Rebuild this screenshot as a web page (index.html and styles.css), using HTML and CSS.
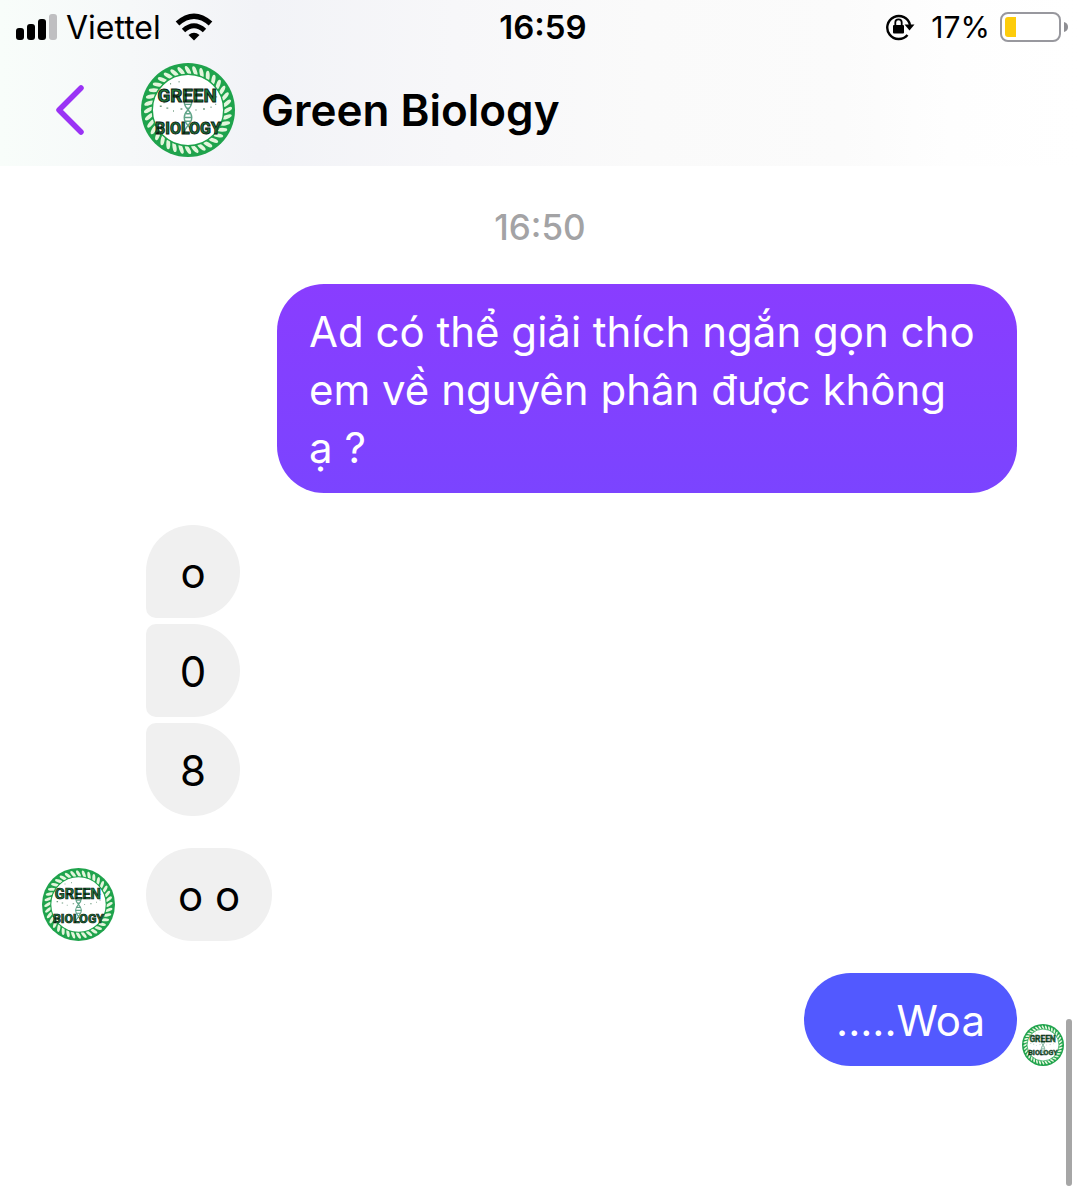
FILE: index.html
```html
<!DOCTYPE html>
<html lang="vi">
<head>
<meta charset="utf-8">
<meta name="viewport" content="width=device-width, initial-scale=1">
<title>Green Biology</title>
<link rel="stylesheet" href="styles.css">
</head>
<body>
<svg class="sprite" aria-hidden="true">
  <defs>
    <ellipse id="strand" cx="50" cy="8" rx="2.1" ry="5.4" transform="rotate(-30 50 8)"/>
    <g id="strands">
      <use href="#strand"/>
      <use href="#strand" transform="rotate(10 50 50)"/>
      <use href="#strand" transform="rotate(20 50 50)"/>
      <use href="#strand" transform="rotate(30 50 50)"/>
      <use href="#strand" transform="rotate(40 50 50)"/>
      <use href="#strand" transform="rotate(50 50 50)"/>
    </g>
    <symbol id="logo" viewBox="0 0 100 100">
      <circle cx="50" cy="50" r="50" fill="#1fa34c"/>
      <g fill="#e4f6dc">
        <use href="#strands"/>
        <use href="#strands" transform="rotate(60 50 50)"/>
        <use href="#strands" transform="rotate(120 50 50)"/>
        <use href="#strands" transform="rotate(180 50 50)"/>
        <use href="#strands" transform="rotate(240 50 50)"/>
        <use href="#strands" transform="rotate(300 50 50)"/>
      </g>
      <circle cx="50" cy="50" r="38" fill="#fff" stroke="#1fa34c" stroke-width="1.5"/>
      <path d="M20 46h2M24 42h1M27 48h2M34 51h1M42 49h2M58 50h1M66 49h2M74 47h1M79 44h1M80 36h1M31 22h1M40 20h1M26 29h1" stroke="#6f9c80" stroke-width="1.5"/>
      <path d="M46 41c0 9 8 9 8 17s-8 9-8 17M54 41c0 9-8 9-8 17s8 9 8 17M46 44h8M48 48h4M48 54h4M46 58h8M47 62h6" fill="none" stroke="#5fa387" stroke-width="1.5"/>
      <text class="logo-text logo-top" x="49" y="42">GREEN</text>
      <text class="logo-text" x="50" y="75">BIOLOGY</text>
    </symbol>
  </defs>
</svg>

<header class="top">
  <div class="status">
    <div class="status-left">
      <svg class="signal" viewBox="0 0 42 28" aria-hidden="true">
        <rect x="0" y="15" width="8" height="12" rx="3"/>
        <rect x="11" y="11" width="8" height="16" rx="3"/>
        <rect x="22" y="6" width="8" height="21" rx="3"/>
        <rect x="33" y="1" width="8" height="26" rx="3" fill="#bfbfc1"/>
      </svg>
      <span class="carrier">Viettel</span>
      <svg class="wifi" viewBox="0 0 38 28" aria-hidden="true">
        <path d="M2.500 10.500Q19-4 35.500 10.500" fill="none" stroke="#000" stroke-width="5.500"/>
        <path d="M8.500 17.500Q19 8 29.500 17.500" fill="none" stroke="#000" stroke-width="5"/>
        <path d="M19 27.500l-5.500-5.500q5.500-4.500 11 0z"/>
      </svg>
    </div>
    <time class="clock">16:59</time>
    <div class="status-right">
      <svg class="lock" viewBox="0 0 30 28" aria-hidden="true">
        <path d="M22.500 22A11.500 11.500 0 1 1 25 12" fill="none" stroke="#000" stroke-width="2.400"/>
        <path d="M19.500 11.500h10l-5 6z"/>
        <rect x="8" y="12" width="11" height="8.500" rx="1"/>
        <path d="M10.300 13v-3.500a3.200 3.200 0 0 1 6.400 0V13" fill="none" stroke="#000" stroke-width="1.800"/>
      </svg>
      <span>17%</span>
      <svg class="battery" viewBox="0 0 68 30" aria-hidden="true">
        <rect x="1" y="1" width="59" height="28" rx="7" fill="#fff" stroke="#98989e" stroke-width="2"/>
        <path d="M5 8q0-3 3-3h8v20H8q-3 0-3-3z" fill="#fdcc0b"/>
        <path d="M64 10q4 1 4 5t-4 5z" fill="#8e8e93"/>
      </svg>
    </div>
  </div>
  <div class="chat-bar">
    <button class="back" type="button" aria-label="Quay lại">
      <svg viewBox="0 0 30 50" aria-hidden="true"><path d="M26 3L4 25l22 22" fill="none" stroke="#9a33f5" stroke-width="5.500" stroke-linecap="round" stroke-linejoin="round"/></svg>
    </button>
    <svg class="avatar avatar-large" role="img" aria-label="Green Biology"><use href="#logo"/></svg>
    <h1 class="name">Green Biology</h1>
  </div>
</header>

<main class="chat">
  <time class="stamp">16:50</time>
  <div class="row sent">
    <p class="bubble question">Ad có thể giải thích ngắn gọn cho em về nguyên phân được không ạ&nbsp;?</p>
  </div>
  <div class="row received">
    <div class="stack">
      <p class="bubble first">o</p>
      <p class="bubble middle">0</p>
      <p class="bubble last">8</p>
    </div>
  </div>
  <div class="row received">
    <svg class="avatar avatar-medium" role="img" aria-label="Green Biology"><use href="#logo"/></svg>
    <p class="bubble">o o</p>
  </div>
  <div class="row sent seen">
    <p class="bubble reply">.....Woa</p>
    <svg class="avatar avatar-small" role="img" aria-label="Green Biology"><use href="#logo"/></svg>
  </div>
  <div class="scrollbar"></div>
</main>
</body>
</html>
```
FILE: styles.css
```css
* {
  box-sizing: border-box;
}

body {
  margin: 0;
  min-height: 100vh;
  display: flex;
  flex-direction: column;
  background: #fff;
  color: #000;
  font-family: Inter, "Liberation Sans", sans-serif;
}

h1,
p {
  margin: 0;
}

svg {
  display: block;
  flex: none;
}

.sprite {
  position: absolute;
  width: 0;
  height: 0;
}

.top {
  padding-bottom: 9px;
  background: linear-gradient(90deg, #f8fdfa 0%, #f6f8f9 12%, #f2f3f7 24%, #f7f7f9 42%, #fafafa 60%, #fbfbfb 78%, #fefefe 88%, #fff 100%);
}

.status {
  display: grid;
  grid-template-columns: 1fr auto 1fr;
  align-items: center;
  height: 54px;
  padding: 0 12px 0 16px;
  font-size: 30px;
}

.status-left,
.status-right {
  display: flex;
  align-items: center;
}

.status-left {
  gap: 8px;
}

.status-right {
  justify-content: flex-end;
  gap: 10px;
}

.carrier {
  font-size: 32px;
}

.clock {
  padding-left: 2px;
  font-size: 33px;
  font-weight: 600;
}

.signal {
  width: 42px;
  height: 28px;
}

.wifi {
  width: 38px;
  height: 28px;
  margin-left: 6px;
}

.lock {
  width: 30px;
  height: 28px;
  margin-right: 6px;
}

.battery {
  width: 68px;
  height: 30px;
}

.chat-bar {
  display: flex;
  align-items: center;
  padding-top: 9px;
}

.back {
  margin: 0 56px 0 55px;
  padding: 0;
  border: 0;
  background: none;
}

.back svg {
  width: 30px;
  height: 50px;
}

.name {
  margin-left: 26px;
  font-size: 44px;
  font-weight: 600;
  line-height: 54px;
}

.avatar-large {
  width: 94px;
  height: 94px;
}

.avatar-medium {
  width: 73px;
  height: 73px;
}

.avatar-small {
  width: 42px;
  height: 42px;
}

.logo-text {
  fill: #1e7a3e;
  stroke: #0b1a10;
  stroke-width: 1px;
  font-family: Roboto, "Liberation Sans", sans-serif;
  font-size: 17px;
  font-weight: 700;
  text-anchor: middle;
}

.logo-top {
  font-size: 20px;
}

.chat {
  position: relative;
  flex: 1;
  display: flex;
  flex-direction: column;
  gap: 32px;
  padding: 36px 16px 80px;
}

.stamp {
  align-self: center;
  color: #a3a3a5;
  font-size: 35px;
  font-weight: 500;
  line-height: 50px;
}

.row {
  display: flex;
  align-items: flex-end;
}

.sent {
  justify-content: flex-end;
  padding-right: 47px;
}

.seen {
  gap: 5px;
  padding-right: 0;
}

.received {
  gap: 31px;
  padding-left: 26px;
}

.stack {
  display: flex;
  flex-direction: column;
  gap: 6px;
  margin-left: 104px;
}

.bubble {
  min-width: 94px;
  padding: 19px 32px 16px;
  border-radius: 47px;
  background: #f0f0f0;
  font-size: 42px;
  line-height: 58px;
  text-align: center;
}

.question {
  max-width: 740px;
  background: linear-gradient(#893dff, #7b44ff);
  color: #fff;
  text-align: left;
}

.reply {
  background: #5259ff;
  color: #fff;
}

.first {
  border-bottom-left-radius: 10px;
}

.middle {
  border-top-left-radius: 10px;
  border-bottom-left-radius: 10px;
}

.last {
  border-top-left-radius: 10px;
}

.scrollbar {
  position: absolute;
  right: 8px;
  bottom: 18px;
  width: 6px;
  height: 167px;
  border-radius: 3px;
  background: #a6a6a6;
}
```
